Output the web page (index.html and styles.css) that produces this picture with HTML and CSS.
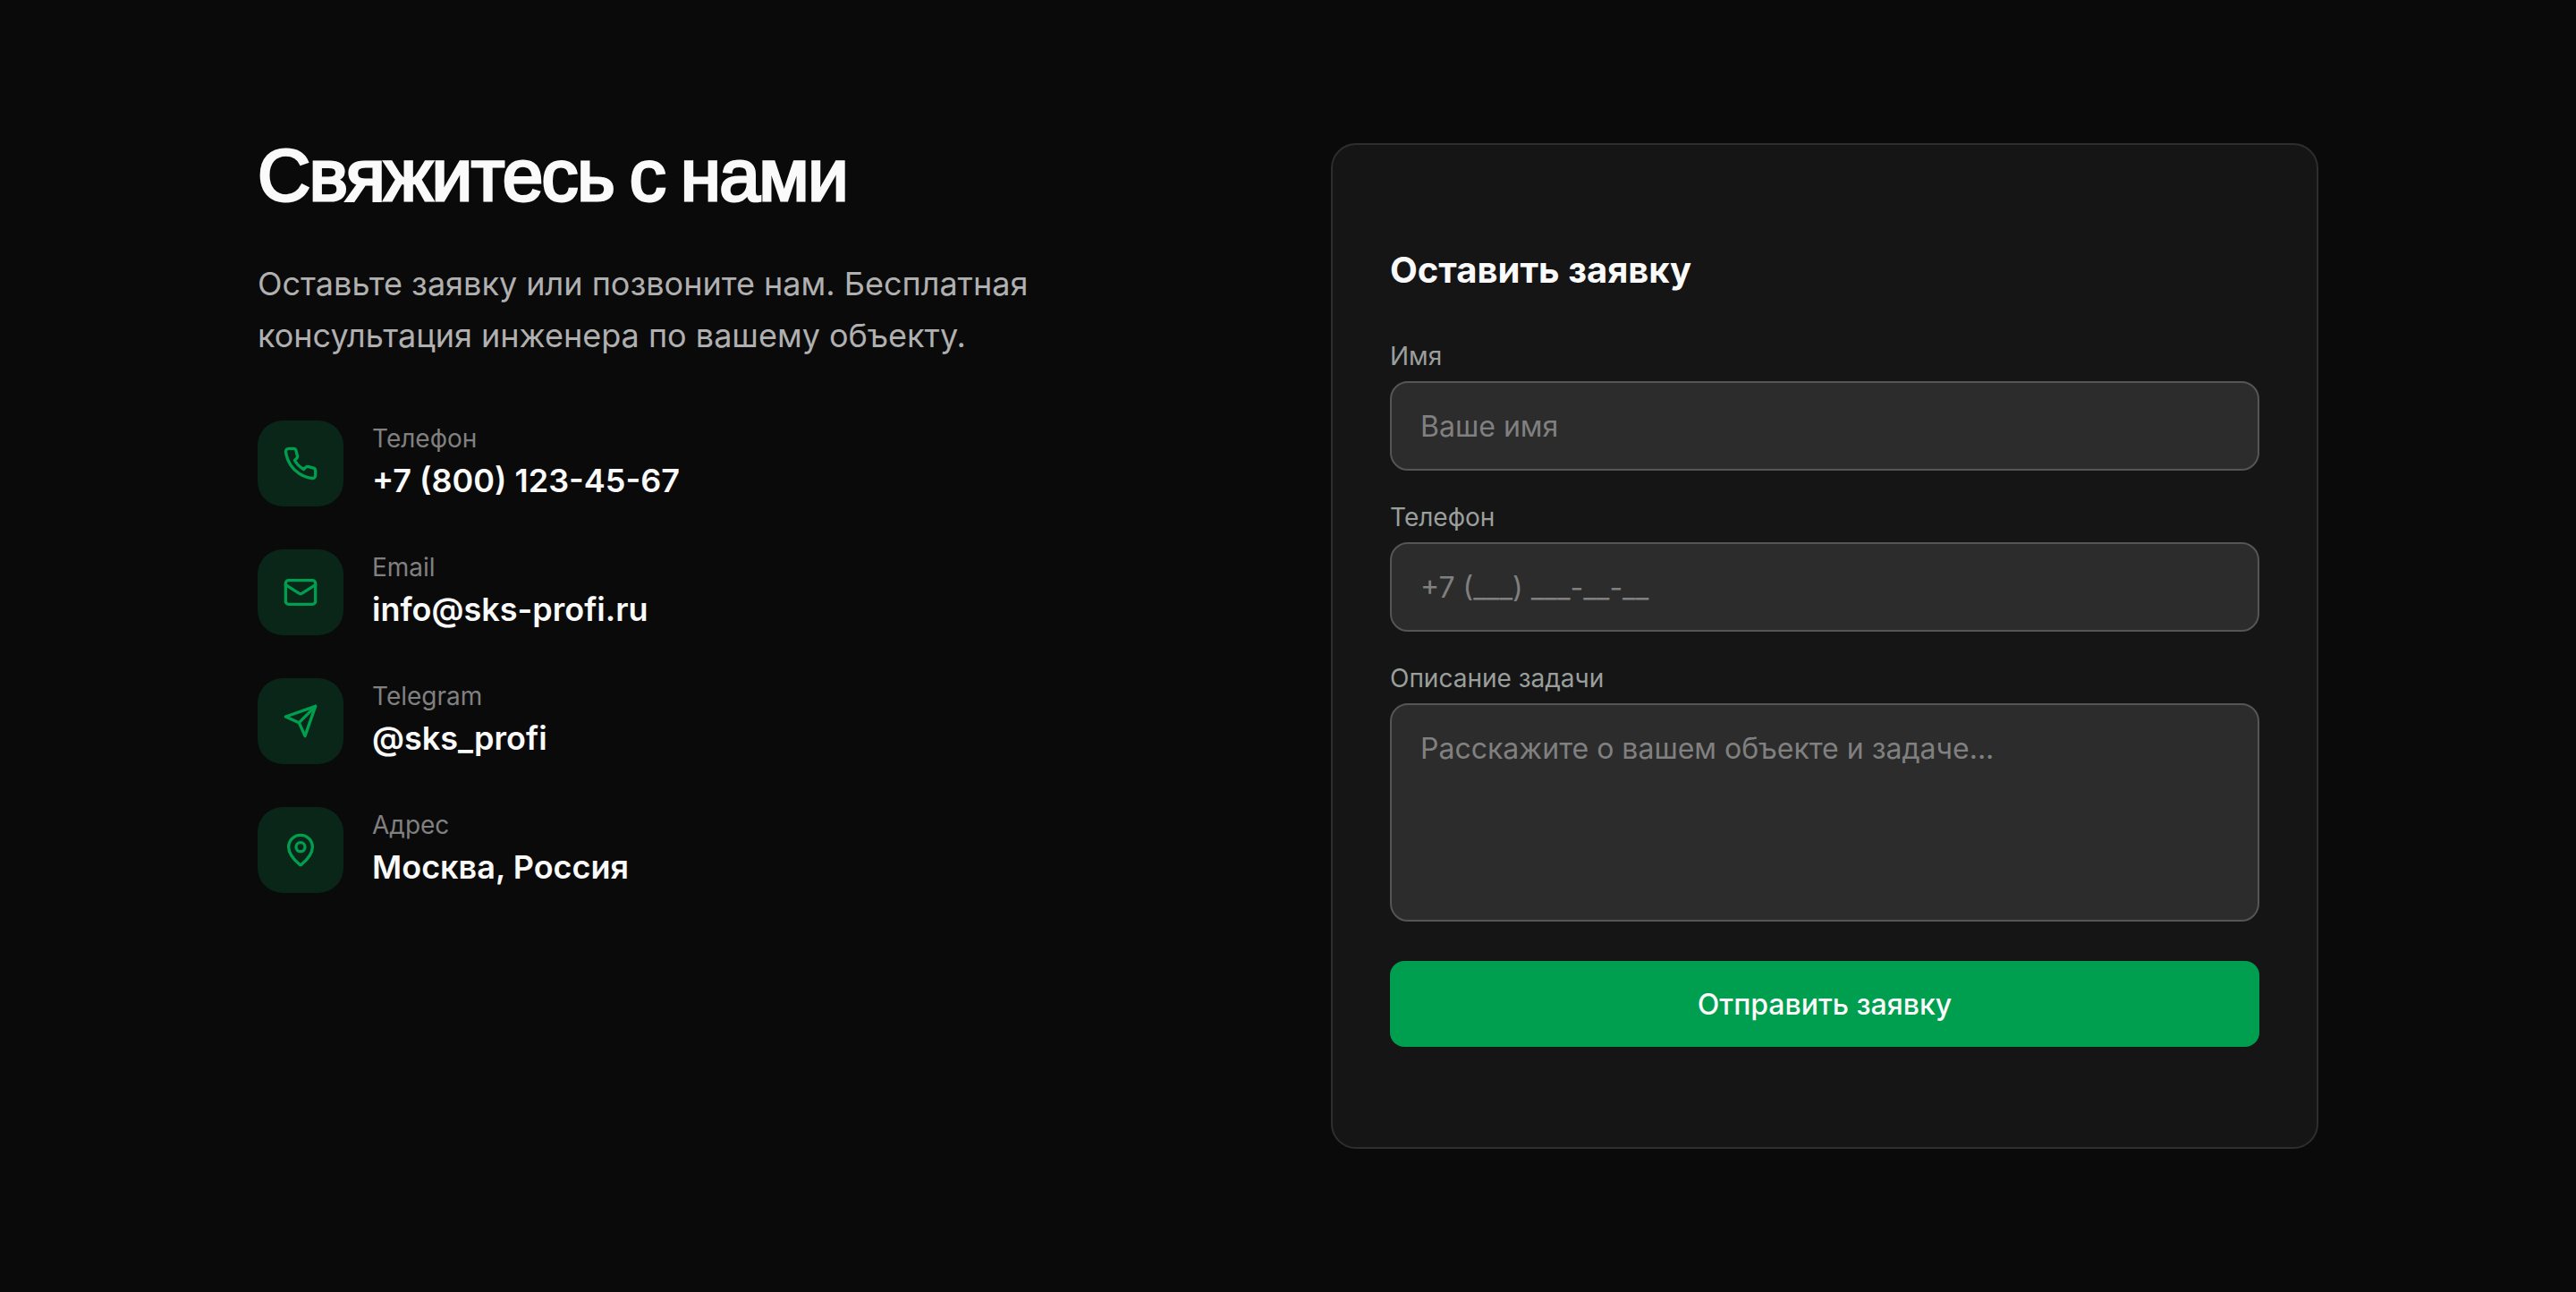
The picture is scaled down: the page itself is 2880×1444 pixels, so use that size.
FILE: index.html
```html
<!DOCTYPE html>
<html lang="ru">
<head>
    <meta charset="UTF-8">
    <meta name="viewport" content="width=device-width, initial-scale=1.0">
    <title>Свяжитесь с нами</title>
    <link rel="stylesheet" href="styles.css">
</head>
<body>
    <section class="contact">
        <div class="container">
            <!-- Contact details -->
            <div class="info">
                <h2 class="title">Свяжитесь с нами</h2>
                <p class="lead">Оставьте заявку или позвоните нам. Бесплатная консультация инженера по вашему объекту.</p>
                <ul class="contact-list">
                    <li class="contact-item">
                        <div class="icon-box">
                            <svg class="icon" viewBox="0 0 24 24"><path d="M22 16.92v3a2 2 0 0 1-2.18 2 19.79 19.79 0 0 1-8.63-3.07 19.5 19.5 0 0 1-6-6 19.79 19.79 0 0 1-3.07-8.67A2 2 0 0 1 4.11 2h3a2 2 0 0 1 2 1.72 12.84 12.84 0 0 0 .7 2.81 2 2 0 0 1-.45 2.11L8.09 9.91a16 16 0 0 0 6 6l1.27-1.27a2 2 0 0 1 2.11-.45 12.84 12.84 0 0 0 2.81.7A2 2 0 0 1 22 16.92z"/></svg>
                        </div>
                        <div class="contact-text">
                            <div class="contact-label">Телефон</div>
                            <a class="contact-value" href="tel:+78001234567">+7 (800) 123-45-67</a>
                        </div>
                    </li>
                    <li class="contact-item">
                        <div class="icon-box">
                            <svg class="icon" viewBox="0 0 24 24"><rect x="2" y="4" width="20" height="16" rx="2"/><path d="m22 7-8.97 5.7a1.94 1.94 0 0 1-2.06 0L2 7"/></svg>
                        </div>
                        <div class="contact-text">
                            <div class="contact-label">Email</div>
                            <a class="contact-value" href="mailto:info@sks-profi.ru">info@sks-profi.ru</a>
                        </div>
                    </li>
                    <li class="contact-item">
                        <div class="icon-box">
                            <svg class="icon" viewBox="0 0 24 24"><path d="m22 2-7 20-4-9-9-4Z"/><path d="M22 2 11 13"/></svg>
                        </div>
                        <div class="contact-text">
                            <div class="contact-label">Telegram</div>
                            <a class="contact-value" href="#">@sks_profi</a>
                        </div>
                    </li>
                    <li class="contact-item">
                        <div class="icon-box">
                            <svg class="icon" viewBox="0 0 24 24"><path d="M20 10c0 4.993-5.539 10.193-7.399 11.799a1 1 0 0 1-1.202 0C9.539 20.193 4 14.993 4 10a8 8 0 0 1 16 0"/><circle cx="12" cy="10" r="3"/></svg>
                        </div>
                        <div class="contact-text">
                            <div class="contact-label">Адрес</div>
                            <span class="contact-value">Москва, Россия</span>
                        </div>
                    </li>
                </ul>
            </div>

            <!-- Request form -->
            <form class="card">
                <h3 class="card-title">Оставить заявку</h3>
                <div class="field">
                    <label for="name">Имя</label>
                    <input class="control" type="text" id="name" placeholder="Ваше имя">
                </div>
                <div class="field">
                    <label for="phone">Телефон</label>
                    <input class="control" type="tel" id="phone" placeholder="+7 (___) ___-__-__">
                </div>
                <div class="field field-message">
                    <label for="message">Описание задачи</label>
                    <textarea class="control" id="message" placeholder="Расскажите о вашем объекте и задаче..."></textarea>
                </div>
                <button class="submit" type="submit">Отправить заявку</button>
            </form>
        </div>
    </section>
</body>
</html>
```

FILE: styles.css
```css
* {
    margin: 0;
    padding: 0;
    box-sizing: border-box;
}
body {
    background: #0a0a0a;
    color: #fafafa;
    font-family: 'Inter', sans-serif;
    font-size: 32px;
    line-height: 48px;
}
.contact {
    min-height: 100vh;
    padding: 160px 288px;
}
.container {
    display: grid;
    grid-template-columns: 1fr 1fr;
    gap: 96px;
    align-items: start;
}
.title {
    font-family: 'Liberation Sans', sans-serif;
    font-size: 82px;
    line-height: 72px;
    font-weight: 400;
    letter-spacing: -1.65px;
    word-spacing: -3.5px;
    -webkit-text-stroke: 3px #fafafa;
    margin-bottom: 56px;
}
.lead {
    max-width: 896px;
    font-size: 36px;
    line-height: 58px;
    color: #b0b0b0;
    margin-bottom: 66px;
}
.contact-list {
    list-style: none;
    display: flex;
    flex-direction: column;
    gap: 48px;
}
.contact-item {
    display: flex;
    align-items: center;
    gap: 32px;
}
.icon-box {
    display: flex;
    align-items: center;
    justify-content: center;
    width: 96px;
    height: 96px;
    border-radius: 28px;
    background: #0a2618;
}
.icon {
    width: 40px;
    height: 40px;
    fill: none;
    stroke: #009e4f;
    stroke-width: 2;
    stroke-linecap: round;
    stroke-linejoin: round;
}
.contact-text {
    padding-bottom: 2px;
}
.contact-label {
    font-size: 28px;
    line-height: 40px;
    color: #808080;
}
.contact-value {
    display: block;
    font-size: 36px;
    line-height: 54px;
    font-weight: 600;
    color: #fafafa;
    text-decoration: none;
}
.card {
    padding: 112px 64px;
    border: 2px solid #2e2e2e;
    border-radius: 28px;
    background: #151515;
}
.card-title {
    font-size: 40px;
    line-height: 56px;
    font-weight: 700;
    margin-bottom: 48px;
}
.field {
    display: flex;
    flex-direction: column;
    gap: 8px;
    margin-bottom: 32px;
}
.field-message {
    margin-bottom: 44px;
}
label {
    font-size: 28px;
    line-height: 40px;
    color: #9a9f9c;
}
.control {
    width: 100%;
    height: 100px;
    padding: 24px 32px;
    border: 2px solid #555;
    border-radius: 20px;
    background: #2c2c2c;
    color: #fafafa;
    font: inherit;
    outline: none;
}
.control:focus {
    border-color: #009e4f;
}
.control::placeholder {
    color: #808080;
    opacity: 1;
}
textarea.control {
    height: 244px;
    padding-top: 25px;
    resize: none;
}
.submit {
    display: block;
    width: 100%;
    height: 96px;
    padding-top: 2px;
    border: none;
    border-radius: 16px;
    background: #009e4f;
    color: #fafafa;
    font: inherit;
    font-weight: 500;
    cursor: pointer;
}
```
